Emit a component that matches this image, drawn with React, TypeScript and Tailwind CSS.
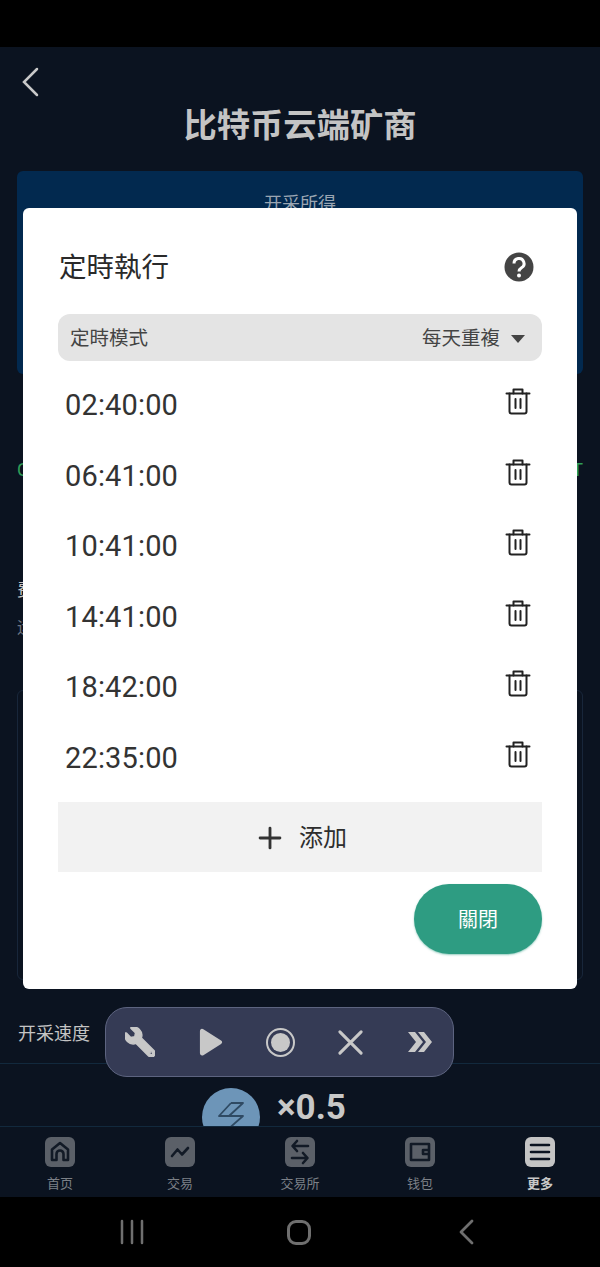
import { Plus } from 'lucide-react'
import { FaWrench } from 'react-icons/fa'

const times = ['02:40:00', '06:41:00', '10:41:00', '14:41:00', '18:42:00', '22:35:00']

const TrashIcon = () => (
    <svg width="26" height="28" viewBox="0 0 26 28" fill="none" stroke="#222" strokeWidth="2" strokeLinejoin="round" strokeLinecap="round">
        <path d="M1.5 6.5h23" />
        <path d="M8.5 6.5V2.5h9v4" />
        <path d="M4.5 6.5v18a2 2 0 0 0 2 2h13a2 2 0 0 0 2-2v-18" />
        <path d="M10.5 12v9M15.5 12v9" />
    </svg>
)

const tabs = [
    {
        label: '首页',
        icon: <path d="M7 23V12.500L15 6l8 6.500V23h-4.500v-6a3.500 3.500 0 0 0-7 0v6z" />,
    },
    {
        label: '交易',
        icon: <path d="M7 19l5.500-6.500 4.500 5L23 11" />,
    },
    {
        label: '交易所',
        icon: <path d="M12 4L7.500 9l4.500 5M8 9h15M18 16l4.500 5-4.500 5M22 21H7" />,
    },
    {
        label: '钱包',
        icon: <path d="M6 7h18v16H6zM18 13h6v4h-6z" />,
    },
    {
        label: '更多',
        active: true,
        icon: <path d="M6 8h18M6 15h18M6 22h18" />,
    },
]

export default function App() {
    return (
        <div className="relative w-[600px] h-[1267px] overflow-hidden bg-black flex flex-col font-['Roboto','Noto_Sans_CJK_SC',sans-serif]">
            <div className="h-[47px] shrink-0 bg-black" />

            {/* page behind the dialog */}
            <main className="flex-1 min-h-0 flex flex-col overflow-hidden bg-[#0b1320]">
                <div className="pl-[20px] pt-[19px] h-[124px] shrink-0">
                    <svg width="26" height="32" viewBox="0 0 26 32" fill="none" stroke="#c9c9c9" strokeWidth="2.500" strokeLinecap="round">
                        <path d="M17 3L4 16l13 13" />
                    </svg>
                    <h1 className="mt-[6px] -ml-[20px] text-center text-[33.300px] leading-[44px] font-bold text-[#c4c4c4]">比特币云端矿商</h1>
                </div>

                <div className="mx-[17px] h-[203px] shrink-0 rounded-md bg-[#02294f] pt-[21px] text-center text-[18px] leading-6 text-[#9aa5b2]">
                    开采所得
                </div>

                <div className="mx-[17px] mt-[84px] flex shrink-0 justify-between text-[18px] leading-6 text-[#2f9e58]">
                    <span>CPU</span>
                    <span>USDT</span>
                </div>

                <div className="mx-[17px] mt-[96px] shrink-0 text-[18px] leading-6 text-[#c4c4c4]">费用</div>
                <div className="mx-[17px] mt-[14px] shrink-0 text-[16px] leading-6 text-[#6e7682]">运行</div>

                <div className="mx-[17px] mt-[50px] h-[290px] shrink-0 rounded-md border border-[#18263a]" />

                <div className="mt-[38px] flex h-[31px] shrink-0 items-center pl-[18px] text-[18px] text-[#c4c4c4]">开采速度</div>

                <div className="mt-[14px] flex h-[64px] shrink-0 items-start justify-center gap-[17px] overflow-hidden border-y border-[#12293d]">
                    <div className="mt-[24px] ml-[-52px] flex h-[58px] w-[58px] shrink-0 items-start justify-center rounded-full bg-[#6d95b8] pt-[14px]">
                        <svg width="28" height="30" viewBox="0 0 28 30" fill="none" stroke="#2f4a63" strokeWidth="1.800" strokeLinejoin="round">
                            <path d="M14 1h12L12 14h14L9 29M14 1L2 14h24" />
                        </svg>
                    </div>
                    <span className="mt-[24px] text-[35px] leading-10 font-bold text-[#c8c8c8]">×0.5</span>
                </div>

                <nav className="flex flex-1 pt-[10px]">
                    {tabs.map((tab) => (
                        <div key={tab.label} className="flex flex-1 flex-col items-center">
                            <div className={`flex h-[30px] w-[30px] items-center justify-center rounded-[6px] ${tab.active ? 'bg-[#c4c4c4]' : 'bg-[#5b6068]'}`}>
                                <svg width="30" height="30" viewBox="0 0 30 30" fill="none" stroke={tab.active ? '#0b1320' : '#121a26'} strokeWidth="2.600" strokeLinecap="round" strokeLinejoin="round">
                                    {tab.icon}
                                </svg>
                            </div>
                            <span className={`mt-[7px] text-[13px] leading-5 ${tab.active ? 'font-bold text-[#c8c8c8]' : 'text-[#7c8087]'}`}>{tab.label}</span>
                        </div>
                    ))}
                </nav>
            </main>

            {/* android nav bar */}
            <div className="flex h-[70px] shrink-0 items-center justify-center gap-[144px] bg-black pr-[5px]">
                <svg width="26" height="26" viewBox="0 0 26 26" fill="none" stroke="#6f6f6f" strokeWidth="2.500" strokeLinecap="round">
                    <path d="M3 2v22M13 2v22M23 2v22" />
                </svg>
                <div className="-ml-[2px] mr-[3px] h-[25px] w-[24px] rounded-[9px] border-[3px] border-[#6f6f6f]" />
                <svg width="18" height="26" viewBox="0 0 18 26" fill="none" stroke="#6f6f6f" strokeWidth="2.800" strokeLinecap="round" strokeLinejoin="round">
                    <path d="M14 2L3 13l11 11" />
                </svg>
            </div>

            {/* dialog */}
            <div className="absolute left-[23px] top-[208px] flex h-[781px] w-[554px] flex-col rounded-[6px] bg-white px-[35px] font-['Roboto','Noto_Sans_CJK_TC',sans-serif]">
                <div className="flex h-[106px] shrink-0 items-start justify-between pt-[41px] pl-[1px] pr-[8px]">
                    <span className="text-[27.500px] leading-[38px] text-[#2a2a2a]">定時執行</span>
                    <svg className="mt-[3px]" width="30" height="30" viewBox="0 0 30 30">
                        <circle cx="15" cy="15" r="14.500" fill="#444" />
                        <path d="M10 11.500a5 5 0 1 1 7.500 4.300c-1.600 1-2.500 1.800-2.500 3.700" fill="none" stroke="#fff" strokeWidth="3" />
                        <circle cx="15" cy="23.500" r="2" fill="#fff" />
                    </svg>
                </div>

                <div className="flex h-[47px] shrink-0 items-center justify-between rounded-[12px] bg-[#e4e4e4] pl-[12px] pr-[17px] pt-[2px] text-[19.500px] text-[#444]">
                    <span>定時模式</span>
                    <div className="flex items-center gap-[11px]">
                        <span>每天重複</span>
                        <span className="h-0 w-0 border-x-[7px] border-t-[8px] border-x-transparent border-t-[#444]" />
                    </div>
                </div>

                <div className="flex shrink-0 flex-col pt-[6px]">
                    {times.map((time) => (
                        <div key={time} className="flex h-[70.500px] items-start justify-between pl-[7px] pr-[11px]">
                            <span className="pt-[16px] text-[29px] leading-[44px] tracking-[0.15px] text-[#333]">{time}</span>
                            <span className="pt-[20px]"><TrashIcon /></span>
                        </div>
                    ))}
                </div>

                <div className="mt-[12px] flex h-[70px] shrink-0 items-center justify-center gap-[12px] bg-[#f2f2f2] pt-[2px] text-[24px] text-[#2e2e2e]">
                    <Plus size={34} strokeWidth={2} color="#333" />
                    <span>添加</span>
                </div>

                <div className="mt-[12px] flex justify-end">
                    <button className="h-[70px] w-[128px] rounded-full bg-[#2e9c82] pt-[1px] text-[20px] text-white shadow-[0_1px_2px_rgba(46,156,130,0.5)]">關閉</button>
                </div>
            </div>

            {/* floating toolbar */}
            <div className="absolute left-[105px] top-[1007px] flex h-[70px] w-[349px] items-center justify-between rounded-[22px] border border-[#5d6480] bg-[#353b55] pl-[19px] pr-[20px]">
                <FaWrench size={30} color="#c8c8c8" stroke="#c8c8c8" strokeWidth={24} className="-scale-x-100" />
                <svg width="25" height="30" viewBox="0 0 26 30" fill="#c8c8c8">
                    <path d="M2 4c0-2.500 2-3.500 4-2l18 11.500c1.500 1 1.500 2.500 0 3.500L6 28.500c-2 1.300-4 .3-4-2z" />
                </svg>
                <div className="flex h-[29px] w-[29px] items-center justify-center rounded-full border-2 border-[#c8c8c8]">
                    <div className="h-[19px] w-[19px] rounded-full bg-[#c8c8c8]" />
                </div>
                <svg width="27" height="27" viewBox="0 0 28 28" fill="none" stroke="#c8c8c8" strokeWidth="3.200" strokeLinecap="round">
                    <path d="M3 3l22 22M25 3L3 25" />
                </svg>
                <svg width="26" height="26" viewBox="0 0 26 26" fill="#c8c8c8">
                    <path d="M1 3h7l8 10-8 10H1l8-10zM11 3h6l8 10-8 10h-6l8-10z" />
                </svg>
            </div>
        </div>
    )
}
